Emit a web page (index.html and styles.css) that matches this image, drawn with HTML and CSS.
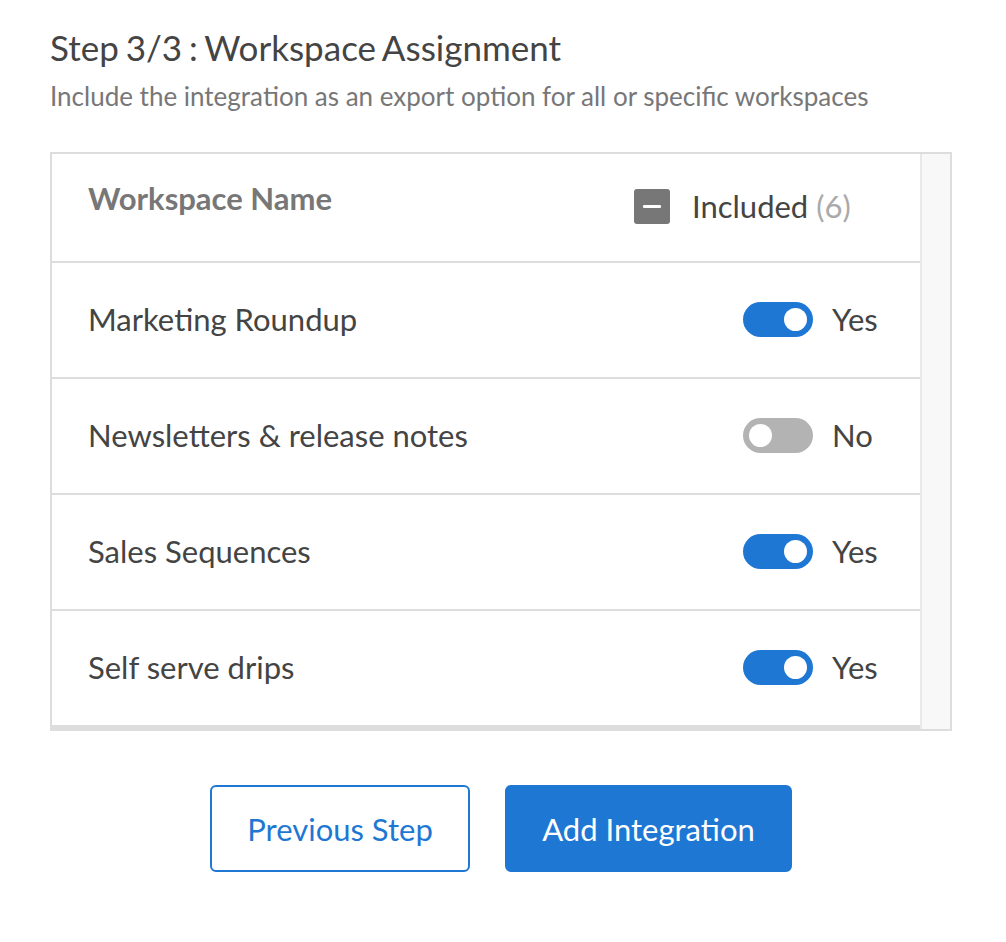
FILE: index.html
```html
<!DOCTYPE html>
<html lang="en">
<head>
<meta charset="utf-8">
<title>Workspace Assignment</title>
<link rel="stylesheet" href="styles.css">
</head>
<body>
<div class="page">
  <h1 class="title">Step 3/3 : Workspace Assignment</h1>
  <p class="subtitle">Include the integration as an export option for all or specific workspaces</p>

  <div class="table">
    <div class="table-body">
      <div class="row header">
        <div class="cell-name head-name">Workspace Name</div>
        <div class="cell-included">
          <span class="checkbox"><span class="minus"></span></span>
          <span class="inc-label">Included <span class="count">(6)</span></span>
        </div>
      </div>
      <div class="row">
        <div class="cell-name">Marketing Roundup</div>
        <div class="cell-toggle"><span class="toggle on"><span class="knob"></span></span><span class="toggle-label">Yes</span></div>
      </div>
      <div class="row">
        <div class="cell-name">Newsletters &amp; release notes</div>
        <div class="cell-toggle"><span class="toggle off"><span class="knob"></span></span><span class="toggle-label">No</span></div>
      </div>
      <div class="row">
        <div class="cell-name">Sales Sequences</div>
        <div class="cell-toggle"><span class="toggle on"><span class="knob"></span></span><span class="toggle-label">Yes</span></div>
      </div>
      <div class="row last">
        <div class="cell-name">Self serve drips</div>
        <div class="cell-toggle"><span class="toggle on"><span class="knob"></span></span><span class="toggle-label">Yes</span></div>
      </div>
    </div>
    <div class="scroll-track"></div>
  </div>

  <div class="actions">
    <button class="btn btn-outline">Previous Step</button>
    <button class="btn btn-primary">Add Integration</button>
  </div>
</div>
</body>
</html>
```

FILE: styles.css
```css
* { box-sizing: border-box; }
html, body { margin: 0; padding: 0; background: #fff; }
body { font-family: Lato, "Open Sans", "Liberation Sans", sans-serif; }

.page {
  width: 902px;
  margin-left: 50px;
  padding-top: 27px;
}

.title {
  margin: 0;
  font-size: 35px;
  font-weight: 400;
  color: #444;
  line-height: 40px;
  word-spacing: -2px;
}

.subtitle {
  margin: 12px 0 0 0;
  font-size: 26px;
  color: #777;
  line-height: 34px;
}

.table {
  margin-top: 39px;
  border: 2px solid #ddd;
  display: flex;
}

.table-body { flex: 1; }

.scroll-track {
  width: 30px;
  background: #f8f8f8;
  border-left: 2px solid #e8e8e8;
}

.row {
  display: flex;
  align-items: center;
  height: 116px;
  padding-left: 36px;
  padding-bottom: 2px;
  border-bottom: 2px solid #ddd;
  font-size: 31px;
  color: #444;
}

.row.header { height: 109px; }
.row.last { height: 118px; border-bottom-width: 4px; }

.cell-name { flex: 1; }

.head-name {
  font-weight: 700;
  color: #777;
  margin-top: -17px;
}

.cell-included {
  width: 286px;
  display: flex;
  align-items: center;
  margin-top: -1px;
}

.checkbox {
  width: 36px;
  height: 35px;
  border-radius: 3px;
  background: #777;
  display: flex;
  align-items: center;
  justify-content: center;
}

.minus {
  width: 18px;
  height: 3px;
  background: #fff;
  border-radius: 1px;
}

.inc-label { margin-left: 22px; color: #444; }
.count { color: #aaa; }

.cell-toggle {
  width: 177px;
  display: flex;
  align-items: center;
}

.toggle {
  width: 70px;
  height: 35px;
  border-radius: 18px;
  display: flex;
  align-items: center;
  padding: 0 6px;
}
.toggle.on { background: #1f77d4; justify-content: flex-end; }
.toggle.off { background: #b3b3b3; justify-content: flex-start; }

.knob {
  width: 23px;
  height: 23px;
  border-radius: 50%;
  background: #fff;
}

.toggle-label { margin-left: 19px; }

.actions {
  display: flex;
  justify-content: center;
  gap: 35px;
  margin-top: 54px;
}

.btn {
  font-family: Lato, "Open Sans", "Liberation Sans", sans-serif;
  font-size: 31px;
  height: 87px;
  border-radius: 6px;
  border: 2px solid #1f77d4;
  cursor: pointer;
  padding: 0;
}

.btn-outline {
  width: 260px;
  background: #fff;
  color: #1f77d4;
}

.btn-primary {
  width: 287px;
  background: #1f77d4;
  color: #fff;
}
```
